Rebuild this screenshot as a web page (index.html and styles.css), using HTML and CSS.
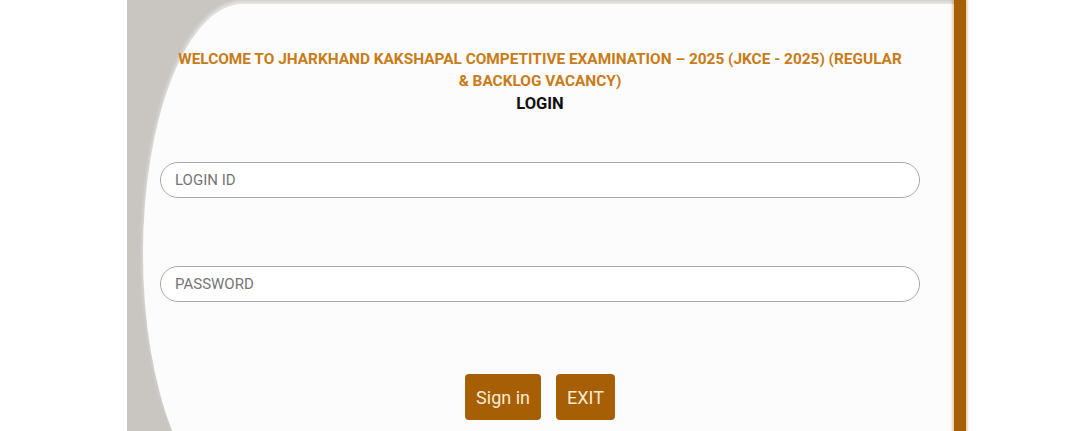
FILE: index.html
```html
<!DOCTYPE html>
<html>
<head>
<meta charset="utf-8">
<link rel="stylesheet" href="styles.css">
</head>
<body>
<div class="page">
  <div class="frame">
    <div class="card">
      <div class="content">
        <h1 class="title">WELCOME TO JHARKHAND KAKSHAPAL COMPETITIVE EXAMINATION – 2025 (JKCE - 2025) (REGULAR &amp; BACKLOG VACANCY)</h1>
        <h2 class="subtitle">LOGIN</h2>
        <div class="field"><input class="input" type="text" placeholder="LOGIN ID"></div>
        <div class="field"><input class="input" type="password" placeholder="PASSWORD"></div>
        <div class="actions">
          <button class="btn">Sign in</button>
          <button class="btn">EXIT</button>
        </div>
      </div>
    </div>
    <div class="edge"></div>
  </div>
</div>
</body>
</html>
```
FILE: styles.css
```css
html, body {
  margin: 0;
  padding: 0;
  background: #ffffff;
  font-family: Roboto, "Liberation Sans", sans-serif;
}
.page {
  width: 1080px;
  height: 431px;
  overflow: hidden;
  display: flex;
  justify-content: flex-start;
}
.frame {
  margin-left: 127px;
  width: 839px;
  height: 520px;
  display: flex;
  background: #c9c6c1;
}
.card {
  flex: 1;
  margin-top: 4px;
  margin-left: 16px;
  height: 500px;
  background: #fcfcfc;
  border-top-left-radius: 100px 250px;
  border-bottom-left-radius: 100px 250px;
  box-shadow: 0 -3px 4px rgba(255,255,255,0.6);
}
.edge {
  width: 12px;
  background: #a65f05;
  box-shadow: 0 0 3px 1px rgba(166,95,5,0.45);
}
.content {
  margin-left: 17px;
  width: 760px;
  padding-top: 44px;
  display: flex;
  flex-direction: column;
  align-items: center;
}
.title {
  margin: 0;
  width: 728px;
  text-align: center;
  font-size: 15.4px;
  line-height: 22px;
  font-weight: 700;
  color: #c97b17;
}
.subtitle {
  margin: 0;
  font-size: 16.5px;
  line-height: 24px;
  font-weight: 700;
  color: #111;
}
.field {
  width: 100%;
  margin-top: 46px;
}
.field + .field {
  margin-top: 68px;
}
.input {
  box-sizing: border-box;
  width: 100%;
  height: 36px;
  border: 1px solid #a9a9a9;
  border-radius: 18px;
  background: #ffffff;
  padding: 0 14px;
  font-family: Roboto, "Liberation Sans", sans-serif;
  font-size: 15px;
  color: #555;
  outline: none;
}
.input::placeholder {
  color: #757575;
}
.actions {
  margin-top: 72px;
  display: flex;
  gap: 15px;
}
.btn {
  height: 46px;
  padding: 0 11px;
  border: none;
  border-radius: 4px;
  background: #a65f05;
  color: #fdebcf;
  font-family: Roboto, "Liberation Sans", sans-serif;
  font-size: 18px;
}
```
